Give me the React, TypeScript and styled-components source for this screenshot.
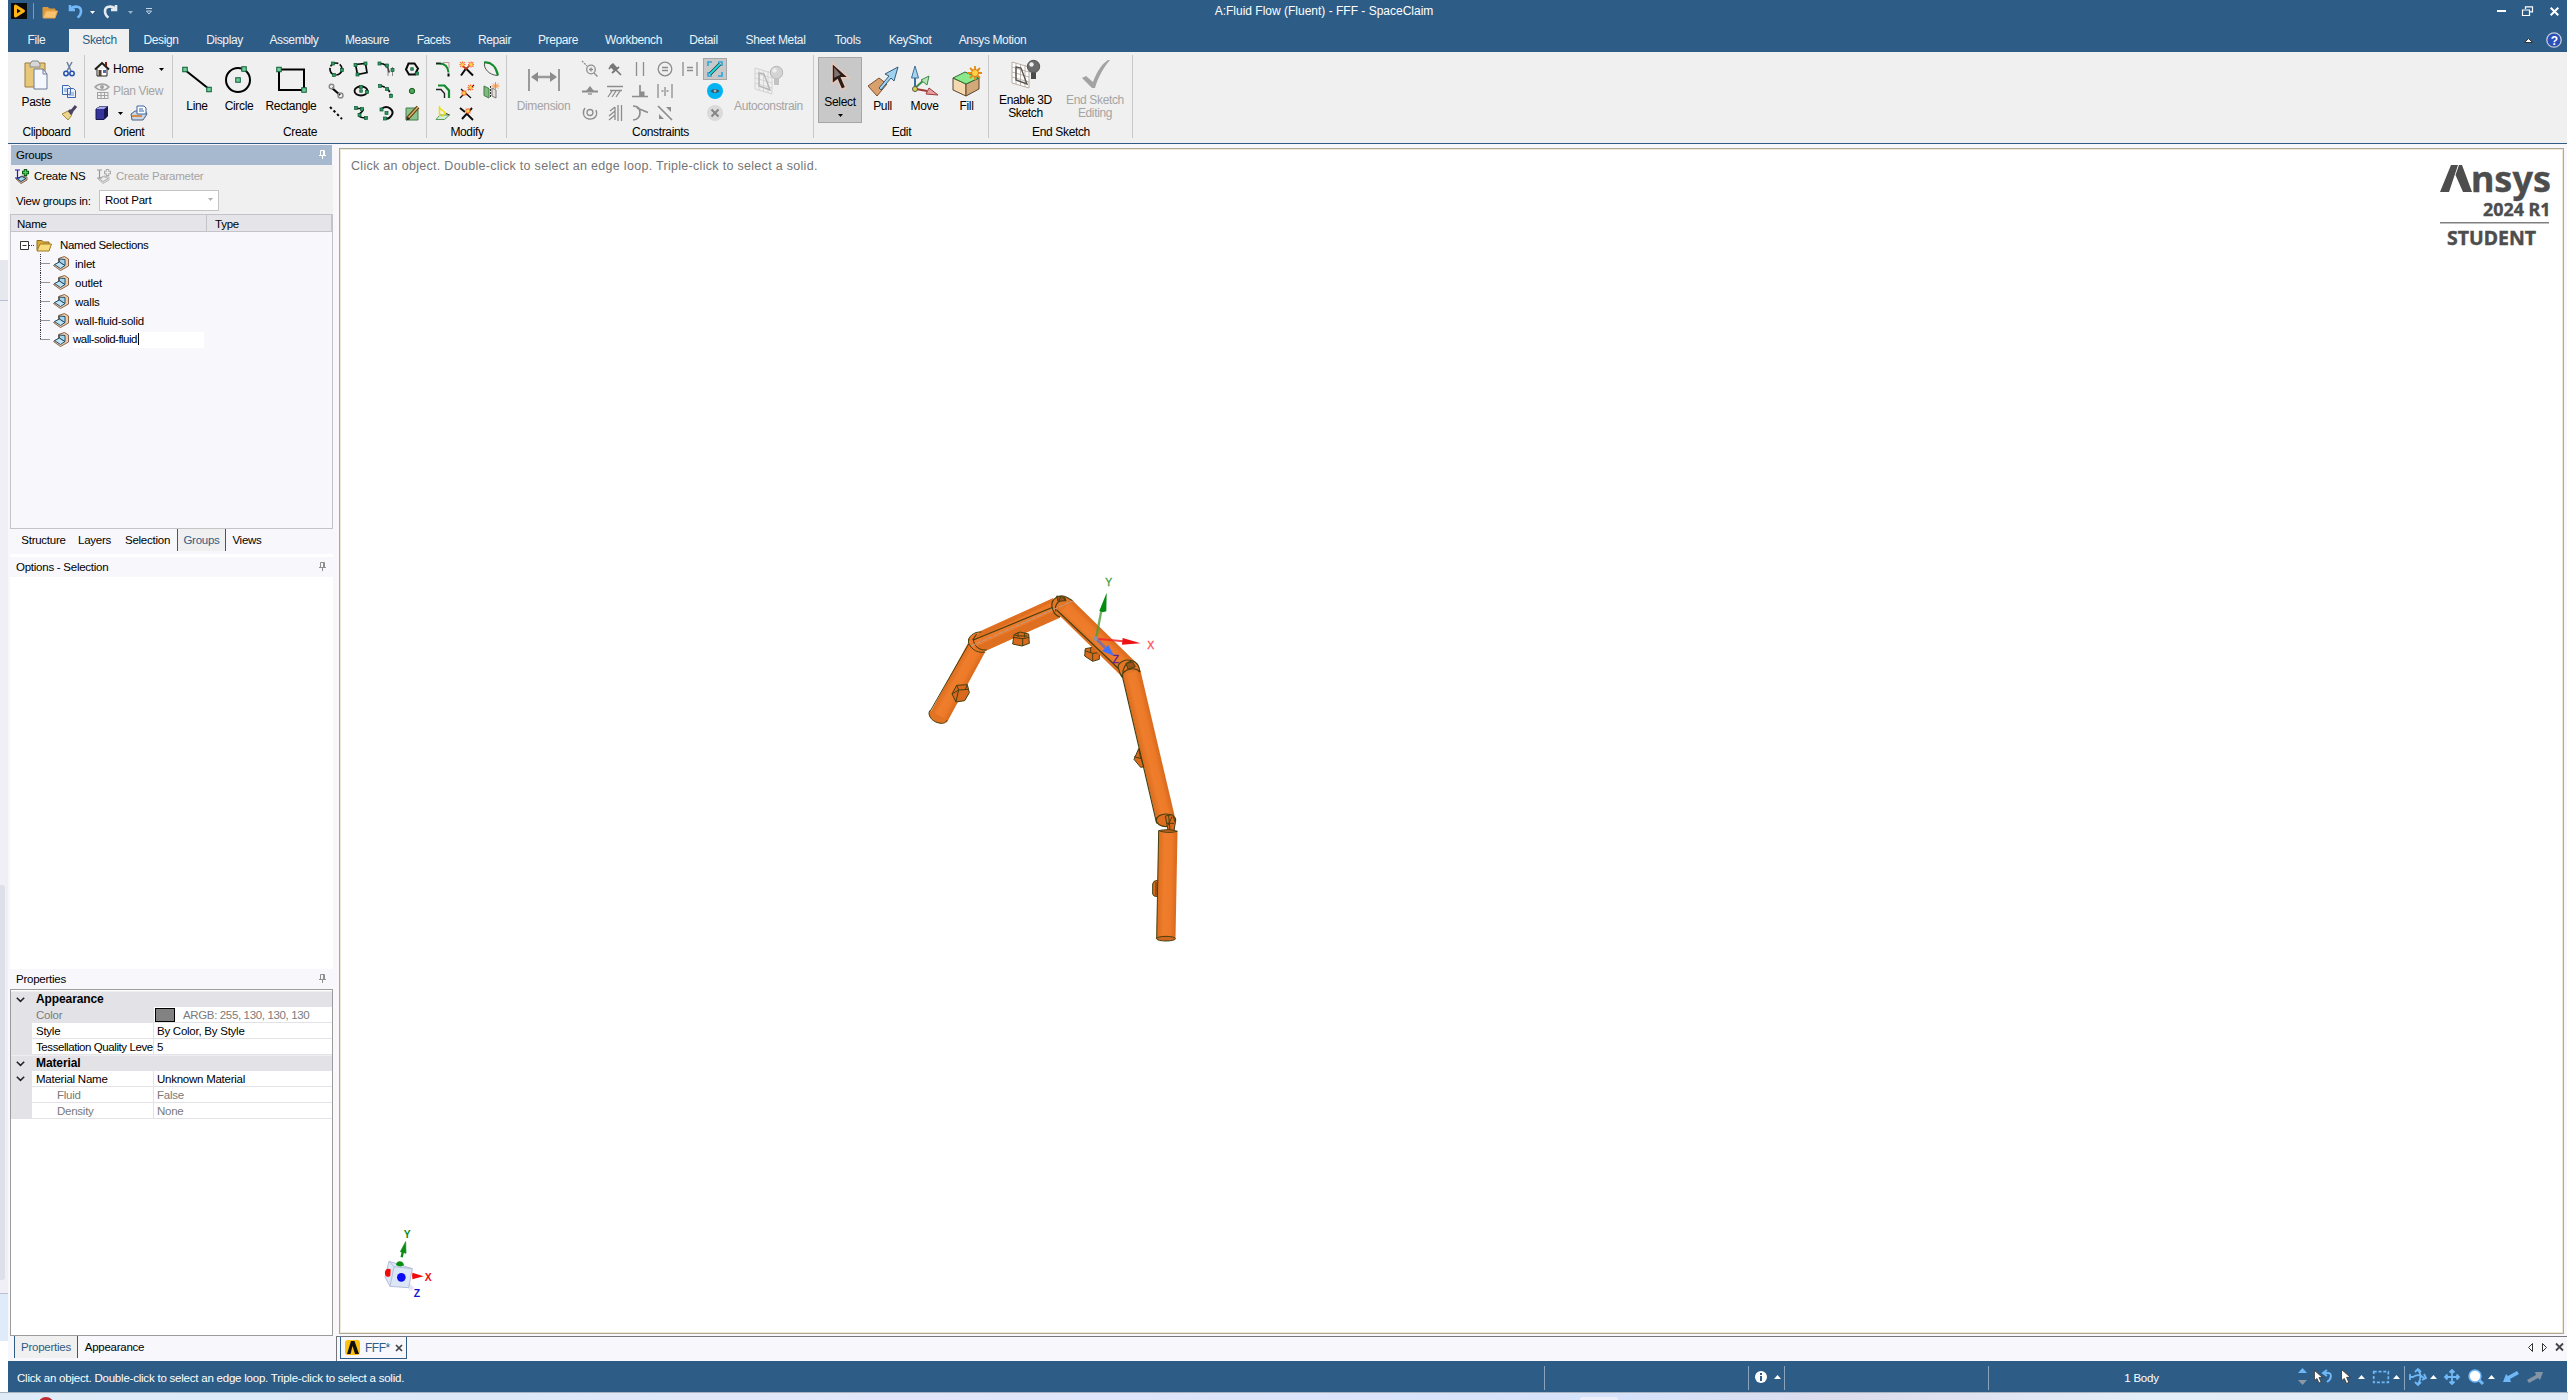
import React from "react";
import styled, { createGlobalStyle } from "styled-components";

const BLUE = "#2d5d87";
const SANS = '"Liberation Sans", Arial, sans-serif';

const Global = createGlobalStyle`
  html, body { margin: 0; padding: 0; background: #fff; }
  * { box-sizing: border-box; }
  body { font-family: ${SANS}; font-size: 11.5px; letter-spacing: -0.25px; color: #000; overflow: hidden; }
  svg { display: block; flex: none; overflow: visible; }
`;

/* ---------- shell ---------- */
const Screen = styled.div`
  width: 2568px; height: 1400px; display: flex; flex-direction: column; background: #fff;
`;
const Upper = styled.div`display: flex; height: 1392px;`;
const Behind = styled.div`width: 8px; display: flex; flex-direction: column;`;
const BehindBlock = styled.div<{ $h: number; $bg: string; $line?: boolean }>`
  height: ${p => p.$h}px; background: ${p => p.$bg};
  ${p => p.$line && "border-top: 1px solid #b8bfd0;"}
`;
const Thumb = styled.div`height: 395px; width: 5px; margin-top: 584px; background: #dfdfe9; border-radius: 0 3px 3px 0;`;
const Window = styled.div`
  width: 2559px; display: flex; flex-direction: column; background: #f7f7fc;
`;
const Desktop = styled.div`
  height: 8px; border-top: 1px solid #a9b4c0; display: flex; overflow: hidden;
  background: linear-gradient(90deg, #dfebf7 0, #dce8f8 500px, #e3e6fa 900px, #d5e2fa 1620px, #dcdcec 1850px, #e4eef8 2150px, #dfebf7 100%);
`;
const RedDot = styled.div`width: 16px; height: 16px; margin: 4px 0 0 38px; border-radius: 50%; background: #c02a30; flex: none;`;
const TaskChip = styled.div`width: 38px; height: 10px; margin: 4px 0 0 1526px; border-radius: 3px; background: #eeeefb; flex: none;`;

/* ---------- title bar ---------- */
const TitleBar = styled.div`
  height: 26px; background: ${BLUE}; color: #fff; display: flex; align-items: flex-start; padding-left: 3px;
`;
const Slot = styled.div<{ $w: number; $h?: number }>`
  width: ${p => p.$w}px; height: ${p => p.$h ?? 22}px; flex: none;
  display: flex; align-items: center; justify-content: center;
`;
const Title = styled.div`
  width: 400px; margin-left: 961px; text-align: center; line-height: 22px; letter-spacing: 0; font-size: 12px;
`;
const WinButtons = styled.div`margin-left: auto; display: flex;`;

const TabRow = styled.div`height: 26px; background: ${BLUE}; display: flex; padding-left: 4px; align-items: stretch;`;
const Tab = styled.div<{ $w: number; $active?: boolean }>`
  width: ${p => p.$w}px; flex: none; text-align: center; line-height: 22px; margin-top: 3px; padding-left: 1px;
  font-size: 12px; letter-spacing: -0.38px; white-space: nowrap;
  color: ${p => (p.$active ? BLUE : "#eef3f8")};
  background: ${p => (p.$active ? "#f0f0f0" : "transparent")};
`;
const TabRight = styled.div`margin-left: auto; display: flex; align-items: center; margin-top: 2px;`;

/* ---------- ribbon ---------- */
const Ribbon = styled.div`
  height: 92px; background: #f0f0f0; border-bottom: 1px solid ${BLUE};
  display: flex; padding-top: 3px; letter-spacing: -0.35px; font-size: 12px; flex: none;
`;
const Group = styled.div<{ $w: number }>`
  width: ${p => p.$w}px; height: 83px; flex: none; border-right: 1px solid #c9c9c9;
  display: flex; flex-direction: column;
`;
const GroupBody = styled.div<{ $pad: number }>`height: 69px; flex: none; display: flex; padding-left: ${p => p.$pad}px;`;
const GroupName = styled.div`text-align: center; line-height: 17px; height: 14px; white-space: nowrap; padding-left: 1px;`;
const Big = styled.div<{ $w: number; $off?: boolean; $top?: number; $gap?: number }>`
  width: ${p => p.$w}px; flex: none; display: flex; flex-direction: column; align-items: center;
  padding-top: ${p => p.$top ?? 8}px; color: ${p => (p.$off ? "#a4a4a4" : "#000")};
  gap: ${p => p.$gap ?? 5}px; line-height: 13px; text-align: center; white-space: nowrap;
`;
const Selected = styled(Big)`
  background: #c8c8c8; border: 1px solid #a6a6a6; height: 66px; margin-top: 2px;
`;
const IconGrid = styled.div<{ $cols: number; $cell: number }>`
  display: grid; grid-template-columns: repeat(${p => p.$cols}, ${p => p.$cell}px);
  grid-auto-rows: 22px; place-items: center; padding-top: 3px; flex: none; height: 69px;
`;
const Column = styled.div<{ $w: number }>`
  width: ${p => p.$w}px; display: flex; flex-direction: column; padding-top: 3px;
`;
const Line = styled.div<{ $off?: boolean }>`
  height: 22px; display: flex; align-items: center; color: ${p => (p.$off ? "#a4a4a4" : "#000")}; white-space: nowrap;
`;
const Picked = styled.div`
  width: 24px; height: 22px; background: #c8c8c8; border: 1px solid #a6a6a6; display: grid; place-items: center;
`;

/* ---------- side panel ---------- */
const Work = styled.div`display: flex; height: 1217px; flex: none;`;
const Side = styled.div`width: 325px; padding: 1px 0 0 2px; display: flex; flex-direction: column; flex: none;`;
const PanelHead = styled.div<{ $active?: boolean }>`
  height: 20px; margin: 0 1px; padding: 0 6px 0 5px; display: flex; align-items: center; justify-content: space-between;
  background: ${p => (p.$active ? "#a7b9ce" : "#f7f7fc")}; flex: none;
`;
const ToolRow = styled.div<{ $h: number }>`
  height: ${p => p.$h}px; background: #f0f0f0; display: flex; align-items: center; padding: 0 0 2px 4px; white-space: nowrap; flex: none;
`;
const Caption = styled.span<{ $w: number; $off?: boolean; $gap?: number }>`
  width: ${p => p.$w}px; margin-left: ${p => p.$gap ?? 4}px; color: ${p => (p.$off ? "#a4a4a4" : "#000")};
`;
const Combo = styled.div`
  width: 120px; height: 21px; background: #fff; border: 1px solid #c4c4c8; display: flex; align-items: center;
  justify-content: space-between; padding: 0 5px 2px 5px;
`;
const Tree = styled.div`
  height: 315px; border: 1px solid #c4c4c8; display: flex; flex-direction: column; flex: none; background: #f7f7fc;
`;
const TreeHead = styled.div`height: 17px; background: #e4e4e9; border-bottom: 1px solid #c4c4c8; display: flex; line-height: 18px; flex: none;`;
const HeadCell = styled.div<{ $w: number; $pad: number }>`
  width: ${p => p.$w}px; padding-left: ${p => p.$pad}px; border-right: 1px solid #c4c4c8;
`;
const Root = styled.div`height: 22px; padding: 4px 0 0 9px; display: flex; align-items: center; flex: none;`;
const RootName = styled.span`margin-left: 8px; letter-spacing: -0.3px;`;
const Leaf = styled.div`height: 19px; display: flex; align-items: center; padding-left: 29px; flex: none;`;
const LeafName = styled.span`margin-left: 6px; letter-spacing: -0.2px;`;
const Edit = styled.span`
  margin-left: 4px; width: 131px; height: 16px; line-height: 15px; background: #fff; letter-spacing: -0.52px;
`;
const Caret = styled.span`display: inline-block; width: 1px; height: 12px; background: #000; vertical-align: -2px; margin-left: 1px;`;
const Tabs = styled.div<{ $h: number; $pad: number }>`
  height: ${p => p.$h}px; display: flex; padding-left: ${p => p.$pad}px; flex: none; line-height: 22px;
`;
const STab = styled.div<{ $w: number; $on?: boolean }>`
  width: ${p => p.$w}px; height: 22px; text-align: center; white-space: nowrap;
  ${p => p.$on && `background:#f0f0f0;color:${BLUE};border-left:1px solid ${BLUE};border-right:1px solid ${BLUE};`}
`;
const White = styled.div<{ $h: number }>`height: ${p => p.$h}px; background: #fff; flex: none;`;
const Props = styled.div`
  height: 347px; border: 1px solid #9c9c9c; background: #fff; flex: none; display: flex; flex-direction: column; padding-top: 1px;
`;
const PRow = styled.div<{ $off?: boolean }>`
  height: 16px; display: flex; line-height: 16px; color: ${p => (p.$off ? "#7a7a7a" : "#000")}; flex: none; white-space: nowrap;
`;
const PSection = styled(PRow)`
  background: #e3e3e7; font-weight: bold; font-size: 12px; letter-spacing: -0.1px; line-height: 15px; border-top: 1px solid #eeeef1;
`;
const SectionName = styled.span`padding-left: 4px;`;
const Gutter = styled.div`width: 21px; background: #e3e3e7; display: flex; align-items: center; padding-left: 5px; flex: none;`;
const PName = styled.div<{ $indent?: boolean; $shade?: boolean }>`
  width: 121px; padding-left: ${p => (p.$indent ? 25 : 4)}px; border-bottom: 1px solid #e3e3e7; flex: none;
  background: ${p => (p.$shade ? "#e3e3e7" : "transparent")};
`;
const Tight = styled.span`letter-spacing: -0.42px;`;
const PVal = styled.div`
  flex: 1; border-left: 1px solid #e3e3e7; border-bottom: 1px solid #e3e3e7; padding-left: 3px; display: flex; align-items: center;
`;
const Swatch = styled.span`width: 20px; height: 14px; background: #828282; border: 1px solid #000; margin: 0 8px 0 -2px;`;
const Argb = styled.span`letter-spacing: -0.36px;`;

/* ---------- viewport ---------- */
const Main = styled.div`flex: 1; display: flex; flex-direction: column; padding-left: 3px; min-width: 0;`;
const Frame = styled.div`
  height: 1186px; margin: 4px 3px 0 3px; position: relative; background: #fff; flex: none;
  border: 1px solid #aba995; box-shadow: inset 0 0 0 1px #efe9d6;
`;
const Hint = styled.div`
  padding: 9px 0 0 11px; color: #757575; font-size: 12.5px; line-height: 16px; letter-spacing: 0.3px;
`;
const Scene = styled.svg<{ $x: number; $y: number }>`position: absolute; left: ${p => p.$x}px; top: ${p => p.$y}px;`;
const DocBar = styled.div`
  margin-top: 2px; height: 25px; border-top: 1px solid #75757d; display: flex; padding-left: 3px; border-left: 1px solid #75757d;
`;
const DocTab = styled.div`
  width: 67px; height: 22px; border: 1px solid ${BLUE}; border-top: 0; background: #f7f7fc; color: ${BLUE};
  display: flex; align-items: center; padding-left: 4px; gap: 5px; font-size: 12px; letter-spacing: -0.5px;
`;
const DocNav = styled.div`margin-left: auto; display: flex; height: 20px;`;

/* ---------- status ---------- */
const Status = styled.div`
  height: 31px; background: ${BLUE}; color: #fff; display: flex; align-items: center; flex: none; letter-spacing: -0.22px;
`;
const StatusText = styled.div<{ $w: number; $center?: boolean }>`
  width: ${p => p.$w}px; padding-left: ${p => (p.$center ? 0 : 9)}px; text-align: ${p => (p.$center ? "center" : "left")};
  padding-top: 2px; flex: none; white-space: nowrap;
`;
const Sep = styled.div<{ $pull?: number }>`
  width: 1px; height: 24px; background: #8aa3bb; margin: 3px 0 0 ${p => -(p.$pull ?? 0)}px; flex: none;
`;

/* ---------- icon helpers ---------- */
const I = ({ w = 16, h = 16, vb, children }: { w?: number; h?: number; vb?: string; children: React.ReactNode }) => (
  <svg width={w} height={h} viewBox={vb ?? `0 0 ${w} ${h}`} fill="none">{children}</svg>
);
const Node = ({ x, y, s = 3 }: { x: number; y: number; s?: number }) => (
  <rect x={x - s / 2} y={y - s / 2} width={s} height={s} fill={s > 3.5 ? "#6fcf97" : "#2e9a62"} stroke="#0c5a34" strokeWidth={s > 3.5 ? 1 : 0.7} />
);
const Down = ({ c = "#000" }: { c?: string }) => <I w={5} h={3}><path d="M0 0h5L2.5 3z" fill={c} /></I>;
const Up = ({ c = "#fff" }: { c?: string }) => <I w={7} h={4}><path d="M0 4h7L3.5 0z" fill={c} /></I>;
const Pin = ({ c }: { c: string }) => (
  <I w={7} h={10}><path d="M1.500 .5h4v5M1.500 .5v5M0 5.500h7M3.500 5.500V9M4.500 1v4" stroke={c} /></I>
);
const Chev = () => <I w={9} h={6}><path d="M.8 .8l3.700 3.600L8.200 .8" stroke="#222" strokeWidth="1.500" /></I>;
const K = { stroke: "#0a0a0a", strokeWidth: 1.7 };
const G = { stroke: "#8d8d8d", strokeWidth: 1.3 };

const createIcons = [
  <I><circle cx="8" cy="8" r="6" {...K} strokeDasharray="9 1.500" /><Node x={5} y={2.5} /><Node x={14} y={9} /><Node x={6} y={14} /></I>,
  <I><path d="M2.500 3.500l10-1 1.500 9L4.500 13.500z" {...K} /><Node x={2.5} y={4} /><Node x={12.500} y={2.500} /><Node x={4.5} y={13.5} /></I>,
  <I><path d="M1.500 2.500c6 0 9 3 9.500 9" {...K} /><path d="M10 6v9M14.500 6v9" stroke="#888" /><Node x={1.500} y={2.500} /><Node x={9} y={4.500} /><Node x={14.500} y={9} /></I>,
  <I><path d="M4.500 2.500h6l3.500 5-3 6H5L2 8.500z" {...K} strokeWidth="2" /><Node x={8} y={8} s={2.500} /><Node x={13} y={12.500} /></I>,
  <I><path d="M4 5l8 7" {...K} strokeWidth="2.200" /><circle cx="3.500" cy="3.500" r="2.300" stroke="#888" strokeWidth="1.400" /><circle cx="12.500" cy="12.500" r="2.500" stroke="#888" strokeWidth="1.400" /></I>,
  <I><ellipse cx="8" cy="8" rx="6.500" ry="4.500" {...K} strokeWidth="1.800" /><Node x={8} y={8} s={2.500} /><Node x={8} y={4} /><Node x={14} y={9} /></I>,
  <I><path d="M2 3c6 0 11 5 11 11" {...K} strokeDasharray="5 2" /><Node x={2} y={3} /><Node x={9} y={6} /><Node x={13} y={13} /></I>,
  <I><circle cx="8" cy="8" r="2.700" fill="#4aa653" stroke="#1c5e2c" /></I>,
  <I><path d="M2 2l12 12" {...K} strokeWidth="2" strokeDasharray="2.500 2.500" /></I>,
  <I><path d="M3 3.500h5c4 0 2 2.500-.5 4.500S6 12 9 12.500l4 .5" {...K} /><Node x={3} y={3} /><Node x={9} y={4} /><Node x={6.500} y={10} /><Node x={13} y={13} /></I>,
  <I><path d="M4 3.500c6-4 13 2 9.500 7-1.500 2.500-4 3.500-6.500 3" {...K} strokeWidth="2" /><Node x={3.500} y={4.500} /><Node x={8.500} y={8} /><Node x={7} y={13.500} /></I>,
  <I><path d="M2 3h12v12H2z" fill="#8cc28c" stroke="#3f8048" /><path d="M3 14L14 2" stroke="#5b3a16" strokeWidth="3.600" /><path d="M4 13L14 2" stroke="#e0b060" strokeWidth="1.500" /><path d="M2 15.500l2-3.500 2 2z" fill="#222" /></I>,
];

const Spark = ({ x, y }: { x: number; y: number }) => (
  <g><path d={`M${x - 2.4} ${y - 2.4}l4.800 4.800M${x + 2.4} ${y - 2.4}l-4.800 4.800M${x - 3} ${y}h6M${x} ${y - 3}v6`} stroke="#ff6a34" strokeWidth="1.100" /><circle cx={x} cy={y} r="1.600" fill="#ffd640" /></g>
);
const modifyIcons = [
  <I><path d="M1 2.500h3c6 0 9 3 9.500 9" stroke="#138a2c" strokeWidth="2" /><path d="M1 2.500h5" stroke="#222" strokeWidth="1.400" /><path d="M8 1.500h6v6" stroke="#c89a9a" /><path d="M13.500 12.500v3" stroke="#000" strokeWidth="2" /></I>,
  <I><path d="M2 14.500l5-7 7 7" {...K} strokeWidth="2" /><path d="M2 3l5 5 6-6" stroke="#b8341a" strokeWidth="1.600" /><Spark x={3.500} y={3.500} /><Spark x={12} y={3.500} /></I>,
  <I><path d="M1 1.500c7-1 12 4 14 13" stroke="#138a2c" strokeWidth="2.200" /><path d="M1.500 2c-1 5 4 12 13 12.500" stroke="#555" /></I>,
  <I><path d="M3 2.500h6.500l4.500 5V15" stroke="#138a2c" strokeWidth="2.200" /><path d="M1 6.500h5l3.500 4V15" stroke="#222" strokeWidth="1.400" /></I>,
  <I><path d="M1 15l5-5M9 7l6-5M2 6l10 9" {...K} strokeWidth="1.200" /><Spark x={5} y={10} /><Spark x={11.500} y={4.500} /></I>,
  <I><path d="M1 3l5 2.500V15l-5-2.500z" fill="#7dbb7d" stroke="#3f7a46" /><path d="M7.500 3v12" stroke="#333" strokeDasharray="2 1" /><path d="M9 5l4 2v8l-4-2z" fill="#e6e2da" stroke="#777" /><path d="M12.500 -1v8M8.500 3h8M10 .5l5 5M15 .5l-5 5" stroke="#ff8a2a" /></I>,
  <I><path d="M1 14.500l4-4.500h9.500l-5 4.500z" fill="#d4ecd4" stroke="#5a9a60" /><path d="M4.500 1v10M4.500 3l6 5-4 3.500" stroke="#ebe000" strokeWidth="1.500" /><path d="M11 8.500l3.500 1.500" stroke="#333" /></I>,
  <I><path d="M1 3l5 4M8 9l6 6M13 3L3 14" {...K} strokeWidth="1.900" /><Spark x={9} y={6} /></I>,
  null,
];

const constraintIcons = [
  <I><path d="M0 0l5 5" {...G} strokeDasharray="2 1" /><circle cx="9" cy="8.500" r="4.300" {...G} /><path d="M9 6.500v4M7 8.500h4M12 12l3.500 3.500" {...G} /></I>,
  <I><path d="M2.500 5L6 2l5 5.500-3.500 3z" fill="#777" /><path d="M2 8l3-4M5 12l7-6M9 9l5 5" stroke="#777" strokeWidth="1.700" /></I>,
  <I><path d="M4.500 1v14M11.500 1v14" {...G} /></I>,
  <I><circle cx="8" cy="8" r="6.800" {...G} /><path d="M5 6.500h6M5 9.500h6" {...G} strokeWidth="1.600" /></I>,
  <I><path d="M1 1v14M15 1v14M5 6.500h6M5 9.500h6" {...G} /></I>,
  <Picked><I><path d="M1 5V1h4M11 1h4v4M1 11v4h4M11 15h4v-4" stroke="#2ba6dd" strokeWidth="1.600" /><path d="M3 13L13 3" stroke="#083c50" strokeWidth="3.200" /><path d="M3 13L13 3" stroke="#21e0dc" strokeWidth="1.800" /></I></Picked>,
  <I><path d="M0 8.500h16" {...G} strokeWidth="2" /><path d="M4 8l4-5 4 5z" fill="#8d8d8d" /><path d="M6 11h4" {...G} /></I>,
  <I><path d="M0 3.500h16M3 7.500h12" {...G} strokeWidth="1.700" /><path d="M5 8l-4 6M9 8l-4 6M13 8l-4 6" {...G} /></I>,
  <I><path d="M8 2v11M0 13.500h16" {...G} strokeWidth="1.700" /><path d="M8 8.500h4.500V13H8z" fill="#8d8d8d" /></I>,
  <I><path d="M1 1v14M15 1v14M8 4v9M4.500 8h2M9.500 8h2" {...G} /></I>,
  null,
  <I><circle cx="8" cy="8" r="8" fill="#00b4f4" /><path d="M3.500 8c2.500-2.800 6.500-2.800 9 0-2.500 2.800-6.500 2.800-9 0z" fill="#3b5464" /><circle cx="8" cy="8" r="1.400" fill="#9fb7c4" /></I>,
  <I><circle cx="8" cy="7.500" r="3" {...G} /><path d="M3 3C0 7 1 13 7 14s9-4 7-9" {...G} /></I>,
  <I><path d="M11 0v16M14.500 0v16M8 2L3 6M8 6l-6 5M8 10l-6 5M8 2v13" {...G} /></I>,
  <I><path d="M1 1c5 0 7 3 7 6.500S6 15 1 15M5 3l11 4.500" {...G} strokeWidth="1.700" /></I>,
  <I><path d="M1 1l14 14" {...G} strokeWidth="1.700" /><path d="M9 2h5v5zM2 9v5h5z" fill="#8d8d8d" /></I>,
  null,
  <I><circle cx="8" cy="8" r="8" fill="#dadada" /><path d="M4.500 4.500l7 7M11.500 4.500l-7 7" stroke="#858585" strokeWidth="2" /></I>,
];

const SketchBulb = ({ dim }: { dim?: boolean }) => {
  const a = dim ? "#b5b5b5" : "#555", b = dim ? "#d2d2d2" : "#b8aca0";
  return (
    <I w={30} h={30}>
      <path d="M1 3l17 5v21L1 24z" fill={dim ? "#efefef" : "#fff"} stroke={b} />
      <path d="M5 4v21M9.500 5v22M14 6v22M1 8l17 5M1 13l17 5M1 18l17 5" stroke={b} strokeWidth=".9" />
      <path d="M5 8l5 1 6 16-11-4z" stroke={a} strokeWidth="1.400" />
      <circle cx="22.500" cy="7.500" r="6.200" fill={dim ? "#d4d4d4" : "#6a6a6a"} stroke={a} />
      <circle cx="20.500" cy="5.500" r="2.200" fill="#eee" />
      <path d="M20 13.500h5V20h-5z" fill={dim ? "#c2c2c2" : "#4a4a4a"} />
    </I>
  );
};

const Cursor = ({ dark, w = 12 }: { dark?: boolean; w?: number }) => (
  <I w={w} h={w * 1.5} vb="0 0 18 27">
    <path d="M1 1v20l5-4 4 9 4-2-4-9h7z" fill={dark ? "#2b1c1a" : "#fff"} stroke={dark ? "#e8c8b8" : "#332a22"} strokeWidth="1.400" />
    {dark && <path d="M3 5v10l6-3z" fill="#7d7472" />}
  </I>
);

const LeafIcon = () => (
  <I w={16} h={15}>
    <path d="M.5 9.500l7 5 8-4.500V3L11.500 .5 5.500 2.500v4z" fill="#f0cba8" stroke="#7a573c" strokeWidth=".9" />
    <path d="M1.500 8.500l6 4 4.500-3-5.500-3.500z" fill="#bfe2f5" stroke="#16435c" strokeWidth=".9" />
    <path d="M6 3l6 .5v6L6.500 6z" fill="#a5d4ee" stroke="#16435c" strokeWidth=".9" />
  </I>
);
const NsIcon = ({ off }: { off?: boolean }) => (
  <I w={16} h={15}>
    <path d="M2 10l5 4.500 6-3.500V8L8 7z" fill={off ? "#ddd" : "#e8b48a"} stroke={off ? "#bbb" : "#7a6a60"} />
    <path d="M3 9.500l4 3 5-3-4-2z" fill={off ? "#eee" : "#a9d8f0"} stroke={off ? "#b0b0b0" : "#16435c"} />
    <path d="M1 1h5M3.500 1v8M1 9h5" stroke={off ? "#999" : "#2a1ab0"} strokeWidth="1.200" />
    <path d="M11.500 0v7M8 3.500h7" stroke={off ? "#aaa" : "#0a5a14"} strokeWidth="3.400" />
    <path d="M11.500 1v5M9 3.500h5" stroke={off ? "#eee" : "#4ed05a"} strokeWidth="1.500" />
  </I>
);
const Folder = ({ orange }: { orange?: boolean }) => (
  <I w={16} h={13}>
    <path d="M1 11V1.500h5L7.500 3H13v2" fill={orange ? "#dc9838" : "#d9ab3c"} stroke={orange ? "#dc9838" : "#8f6a1c"} />
    <path d="M1 12L4 5h11.500L13 12z" fill={orange ? "#f8c370" : "#f6dc7c"} stroke={orange ? "#e6a64c" : "#a07820"} />
  </I>
);

/* ---------- 3D scene ---------- */
const E = "#453f10";
const Tube = ({ a, b, r, id }: { a: [number, number]; b: [number, number]; r: number; id: string }) => {
  const dx = b[0] - a[0], dy = b[1] - a[1], L = Math.hypot(dx, dy);
  const nx = (-dy / L) * r, ny = (dx / L) * r;
  const pts = [[a[0] + nx, a[1] + ny], [b[0] + nx, b[1] + ny], [b[0] - nx, b[1] - ny], [a[0] - nx, a[1] - ny]];
  return (
    <g>
      <linearGradient id={id} gradientUnits="userSpaceOnUse" x1={pts[0][0]} y1={pts[0][1]} x2={pts[3][0]} y2={pts[3][1]}>
        <stop offset="0" stopColor="#dc6d1e" /><stop offset=".35" stopColor="#ee7d2c" /><stop offset=".7" stopColor="#ed7a29" /><stop offset="1" stopColor="#d9691b" />
      </linearGradient>
      <polygon points={pts.map(p => p.join(",")).join(" ")} fill={`url(#${id})`} />
    </g>
  );
};
const Box = ({ d, x }: { d: string; x: string }) => (
  <g stroke={E} strokeWidth="3" strokeLinejoin="round"><path d={d} fill="#d9691c" /><path d={x} fill="none" /></g>
);

const Model = () => (
  <Scene $x={560} $y={411} width={300} height={400} viewBox="0 0 900 1200" fill="none">
    {/* lower left arm */}
    <Tube id="t1" a={[230, 262]} b={[115, 474]} r={29} />
    <path d="M206 252L89 456" stroke={E} strokeWidth="3" />
    <path d="M89 452c-8 16 10 36 34 38 12 1 17-6 18-10" fill="#e27322" stroke={E} strokeWidth="3" />
    <Box d="M170 376l32-2 6 24-14 24-26 4-12-24z" x="M156 402l20-12 30-2M176 390l-6-14M176 390l-8 34M202 374l-6 14" />
    {/* upper left arm */}
    <path d="M206 238c2-12 18-20 34-22L458 116l34 50L262 270c-24 14-50-2-56-32z" fill="#ec7a2a" />
    <path d="M240 214L460 114l-2 12L222 240z" fill="#de6f20" />
    <path d="M224 262L480 146l-2 28L262 270c-14 8-28 4-38-8z" fill="#de6f20" />
    <path d="M220 240L462 140M230 222l-12 18" stroke={E} strokeWidth="3.500" />
    <path d="M206 250c-4-20 16-36 38-34M206 236c-4 24 22 46 50 40M220 236c0 20 16 36 40 34" stroke={E} strokeWidth="3" />
    <Box d="M342 224l18-8 26 6 2 28-22 8-28-6z" x="M338 232l30 4 20-4M368 236v22M354 216v14M374 218v14M342 224l12 4h28" />
    {/* upper right arm */}
    <Box d="M556 266l22-4 20 16v20l-20 6-24-16z" x="M554 272l24 8 20-2M578 280v22M572 264v14" />
    <path d="M456 140c-4-26 26-40 44-28l22 14-46 46c-14-8-18-20-20-32z" fill="#e67626" />
    <Tube id="t3" a={[496, 142]} b={[684, 326]} r={30} />
    <path d="M470 150L660 330" stroke={E} strokeWidth="3.500" />
    <path d="M456 140c-4-26 26-40 44-28l18 10M468 154c-6-20 8-36 28-34M456 140c2 14 10 26 24 32" stroke={E} strokeWidth="3.500" />
    <path d="M470 108l24 4 4 10-24 2zM482 110l-4 12M490 112l6 10" fill="#9a5418" stroke={E} strokeWidth="3" />
    <path d="M214 258L520 122" stroke="#b9a08e" strokeWidth="3" strokeDasharray="14 4" />
    {/* right arm */}
    <Box d="M716 566l14 8 4 46-12 2-20-24z" x="M702 590l22 6 8 24M716 566l6 30" />
    <path d="M654 326c-2-20 22-30 42-24 16 4 24 20 26 42l-54 8c-8-8-12-16-14-26z" fill="#e67626" />
    <Tube id="t4" a={[694, 338]} b={[798, 780]} r={28} />
    <path d="M666 344L770 790" stroke={E} strokeWidth="3.500" />
    <path d="M654 326c-2-20 22-30 42-24 16 4 22 18 24 34M654 320c4 18 8 26 14 34M666 346c6-18 38-28 54-10M668 350c-2-20 8-44 26-46" stroke={E} strokeWidth="3.500" />
    <path d="M678 310l20-4 8 14-22 8z" fill="#9a5418" stroke={E} strokeWidth="3" />
    <ellipse cx="798" cy="781" rx="29" ry="19" fill="#dd6e20" stroke={E} strokeWidth="3.500" />
    {/* bottom arm */}
    <Box d="M796 768l22-4 8 24-4 24-18-2z" x="M806 768l4 42M816 770l-12 26M800 790h22" />
    <Box d="M762 964l14-4v50l-14-2-4-6v-30z" x="M768 966v40" />
    <Tube id="t5" a={[804, 814]} b={[798, 1136]} r={28.5} />
    <path d="M776 812l-6 324" stroke={E} strokeWidth="3" />
    <path d="M776 812c16-4 44-4 56 2-16 5-42 4-56-2z" fill="#c96420" stroke={E} strokeWidth="3" />
    <ellipse cx="798" cy="1136" rx="28.5" ry="7" fill="#cf6820" stroke={E} strokeWidth="3" />
    {/* axes */}
    <path d="M588 236l16-84" stroke="#4c9e3a" strokeWidth="7" opacity=".8" />
    <path d="M620 98l-22 54c6 5 14 5 21 2z" fill="#078a10" />
    <path d="M588 236l82 8" stroke="#f4262a" strokeWidth="6" opacity=".85" />
    <path d="M722 250l-54-16-2 20z" fill="#ee1111" />
    <path d="M588 236l28 28" stroke="#8a6f9a" strokeWidth="9" />
    <path d="M638 284l-14-26-14 14z" fill="#3f74ff" stroke="#3f74ff" strokeWidth="4" />
    <circle cx="587" cy="236" r="7" fill="#8b939e" />
    <g fontFamily={SANS} fontSize="31" letterSpacing="0">
      <text x="616" y="78" fill="#43a047" stroke="#43a047">Y</text>
      <text x="742" y="266" fill="#ff4d4d" stroke="#ff4d4d">X</text>
      <text x="638" y="308" fill="#5a1f9a" stroke="#5a1f9a">Z</text>
    </g>
  </Scene>
);

const Triad = () => (
  <Scene $x={0} $y={1051} width={140} height={120} viewBox="0 0 420 360" fill="none">
    <path d="M188 240l30 28" stroke="#e4e4fb" strokeWidth="14" />
    <path d="M147 184l70 22-11 57-56-4-15-28z" fill="#dbe6f7" stroke="#b6bed8" strokeWidth="3" />
    <path d="M147 184l15 16 55 6M162 200l-12 59" stroke="#b6bed8" strokeWidth="3" />
    <path d="M168 194c2-14 22-14 24 2-8 5-18 4-24-2z" fill="#079010" />
    <path d="M152 208c-14-6-20 6-16 17 4 8 12 6 15 2z" fill="#f40808" />
    <circle cx="184" cy="232" r="13" fill="#0a0af4" />
    <path d="M185 172l4-18" stroke="#0b8a14" strokeWidth="7" />
    <path d="M197 125l-16 30 17 5z" fill="#0b8a14" stroke="#0b8a14" strokeWidth="2" />
    <path d="M217 227h10" stroke="#f40808" strokeWidth="6" />
    <path d="M251 229l-34-11v20z" fill="#f40808" />
    <g fontFamily={SANS} fontSize="31" fontWeight="bold" letterSpacing="0">
      <text x="191" y="114" fill="#0b8a14">Y</text><text x="254" y="243" fill="#f40808">X</text><text x="221" y="290" fill="#1414d8">Z</text>
    </g>
  </Scene>
);

const Logo = () => (
  <Scene $x={2100} $y={15} width={114} height={86} viewBox="0 0 114 86">
    <path d="M0 28L11 1h7L9 28zM19 1h3l10 27h-9L15.500 11z" fill="#4d4d4d" />
    <g fill="#4d4d4d" stroke="#4d4d4d" strokeWidth=".4" fontFamily='"Noto Sans", "Open Sans", sans-serif' fontWeight="bold" letterSpacing="0">
      <text x="31" y="28" fontSize="36" textLength="80" lengthAdjust="spacingAndGlyphs">nsys</text>
      <text x="43" y="52" fontSize="18.500" textLength="67.500" lengthAdjust="spacingAndGlyphs">2024 R1</text>
      <text x="7" y="80.500" fontSize="19" textLength="89" lengthAdjust="spacingAndGlyphs">STUDENT</text>
    </g>
    <path d="M0 58h109v1.500H0z" fill="#808080" />
  </Scene>
);

const tabs: [string, number, boolean?][] = [
  ["File", 48], ["", 9], ["Sketch", 60, true], ["Design", 63], ["Display", 64], ["Assembly", 75], ["Measure", 71], ["Facets", 62],
  ["Repair", 60], ["Prepare", 67], ["Workbench", 84], ["Detail", 56], ["Sheet Metal", 88], ["Tools", 56], ["KeyShot", 69], ["Ansys Motion", 96],
];

const TopBar = () => (
  <>
    <TitleBar>
      <I w={16} h={19}><path d="M0 3h16v16H0z" fill="#0a0a0a" /><path d="M4.500 6l8 5-8 5z" stroke="#fdb515" strokeWidth="3" strokeLinejoin="round" /></I>
      <Slot $w={13}><I w={1} h={16}><path d="M0 0h1v16H0z" fill="#7f9bb5" /></I></Slot>
      <Slot $w={20} $h={24}><Folder orange /></Slot>
      <Slot $w={30}><I w={15} h={14}><path d="M2 1v5h5M2.500 5.500C6 1 13 2 13 7c0 3-1 5-3.500 6.500" stroke="#72b8f8" strokeWidth="2.600" /></I></Slot>
      <Slot $w={5} $h={24}><Down c="#fff" /></Slot>
      <Slot $w={31}><I w={15} h={14}><path d="M13 1v5H8M12.500 5.500C9 1 2 2 2 7c0 3 1 5 3.500 6.500" stroke="#e4e9ee" strokeWidth="2.600" /></I></Slot>
      <Slot $w={8} $h={24}><Down c="#9db2c5" /></Slot>
      <Slot $w={29}><I w={6} h={7}><path d="M0 .5h6" stroke="#c8d4df" /><path d="M.5 3h5L3 6z" stroke="#c8d4df" /></I></Slot>
      <Title>A:Fluid Flow (Fluent) - FFF - SpaceClaim</Title>
      <WinButtons>
        <Slot $w={24}><I w={9} h={2}><path d="M0 0h9v2H0z" fill="#fff" /></I></Slot>
        <Slot $w={28}><I w={11} h={10}><path d="M3.500 3V.8h7v5H8M.5 4h7v5.500h-7z" stroke="#fff" strokeWidth="1.200" /></I></Slot>
        <Slot $w={26}><I w={9} h={9}><path d="M.7 .7l7.600 7.600M8.300 .7L.7 8.300" stroke="#fff" strokeWidth="2" /></I></Slot>
      </WinButtons>
    </TitleBar>
    <TabRow>
      {tabs.map(([t, w, a], i) => <Tab key={i} $w={w} $active={a}>{t}</Tab>)}
      <TabRight>
        <Slot $w={26}><I w={9} h={5}><path d="M.5 4.500h8l-4-4z" fill="#fff" stroke="#333" /></I></Slot>
        <Slot $w={26}>
          <I w={16} h={16}><circle cx="8" cy="8" r="7.200" fill="#2a50b8" stroke="#c3cbd8" strokeWidth="1.300" /><text x="4.700" y="12.500" fontSize="12" fontWeight="bold" fill="#fff">?</text></I>
        </Slot>
      </TabRight>
    </TabRow>
  </>
);

const RibbonBar = () => (
  <Ribbon>
    <Group $w={77}>
      <GroupBody $pad={4}>
        <Big $w={48} $top={4} $gap={5}>
          <I w={26} h={32}>
            <path d="M2 4h20v24H2z" fill="#e8c778" stroke="#9c7c3c" /><path d="M7 5l2-3h6l2 3v3H7z" fill="#d7d7d7" stroke="#8a8a8a" />
            <path d="M11 10h9l4 5v15H11z" fill="#f4f8fd" stroke="#6a7a94" /><path d="M20 10v5h4" stroke="#6a7a94" />
          </I>
          Paste
        </Big>
        <IconGrid $cols={1} $cell={17}>
          <I w={12}><path d="M4 1l4 9M9 1L4 10" stroke="#6a7f9c" strokeWidth="1.500" /><circle cx="3" cy="12.500" r="2.200" stroke="#2450b0" strokeWidth="1.500" /><circle cx="9" cy="12.500" r="2.200" stroke="#2450b0" strokeWidth="1.500" /></I>
          <I w={16}><path d="M1.500 2.500h6l2 2v7h-8zM6.500 5.500h6l2 2v7h-8z" fill="#eaf1fc" stroke="#3c66b0" /><path d="M3 6h3M3 8h3M8 10h5M8 12h5" stroke="#6f92cc" /></I>
          <I w={16}><path d="M1 9l6-3 4 4-4 5z" fill="#ecd48a" stroke="#a68a3c" /><path d="M8 5l3 4M10 7l5-6" stroke="#4a4460" strokeWidth="3" /></I>
        </IconGrid>
      </GroupBody>
      <GroupName>Clipboard</GroupName>
    </Group>
    <Group $w={88}>
      <GroupBody $pad={9}>
        <Column $w={79}>
          <Line>
            <I w={16}><path d="M3 8v7h10V8" fill="#fff" stroke="#222" /><path d="M1 8.500L8 2l7 6.500" stroke="#1d1a14" strokeWidth="2" /><path d="M12 1v4" stroke="#7a1a10" strokeWidth="2" /><path d="M4.500 9h3v6h-3z" fill="#50402c" /><path d="M9 9h3v3H9z" fill="#4a68b8" /></I>
            <Caption $w={46} $gap={3}>Home</Caption><Down />
          </Line>
          <Line $off>
            <I w={16}><path d="M1 4c4-4 10-4 14 0-4 4-10 4-14 0z" stroke="#a2a2a2" strokeWidth="1.500" /><circle cx="8" cy="4" r="2" fill="#a2a2a2" /><path d="M3 9.500h11M3 12.500h11M3 15.500h11M3.500 9v7M7 9v7M10.500 9v7M14 9v7" stroke="#a2a2a2" /></I>
            <Caption $w={58} $off $gap={3}>Plan View</Caption>
          </Line>
          <Line>
            <I w={16}><path d="M2 4l4-2.500h7.500V11L10 14.500H2z" fill="#34349c" stroke="#17174a" /><path d="M2 4l4-2.500h7.500L10 4z" fill="#a6a6e4" /><path d="M10 4.500v10l3.500-3.500V1.500z" fill="#18184e" /></I>
            <Slot $w={20}><Down /></Slot>
            <I w={18}><path d="M1 9l4-3h10l2 3-4 6H2z" fill="#cbd5e4" stroke="#4a6080" /><path d="M7 1h7l2 2v6H7z" fill="#fff" stroke="#3466a8" /><path d="M9 4h4M9 6h5" stroke="#3466a8" /><path d="M2 11h10" stroke="#d28c4c" strokeWidth="2" /></I>
          </Line>
        </Column>
      </GroupBody>
      <GroupName>Orient</GroupName>
    </Group>
    <Group $w={254}>
      <GroupBody $pad={2}>
        <Big $w={44}><I w={30} h={32}><path d="M3 7l24 19" stroke="#000" strokeWidth="2" /><Node x={3} y={6.500} s={4.500} /><Node x={27} y={26.500} s={4.500} /></I>Line</Big>
        <Big $w={40}><I w={30} h={32}><circle cx="14" cy="17" r="12" stroke="#000" strokeWidth="2" /><Node x={14} y={17} s={4.500} /><Node x={20} y={6} s={4.500} /></I>Circle</Big>
        <Big $w={64}><I w={30} h={32}><path d="M3 6.500h25v20.500H3z" stroke="#000" strokeWidth="2" /><Node x={3} y={6.500} s={4.500} /><Node x={28} y={27} s={4.500} /></I>Rectangle</Big>
        <IconGrid $cols={4} $cell={25.3}>{createIcons.map((c, i) => <div key={i}>{c}</div>)}</IconGrid>
      </GroupBody>
      <GroupName>Create</GroupName>
    </Group>
    <Group $w={80}>
      <GroupBody $pad={4}><IconGrid $cols={3} $cell={24.2}>{modifyIcons.map((c, i) => <div key={i}>{c}</div>)}</IconGrid></GroupBody>
      <GroupName>Modify</GroupName>
    </Group>
    <Group $w={307}>
      <GroupBody $pad={3}>
        <Big $w={67} $off><I w={32} h={32}><path d="M1 6v22M31 6v22" stroke="#9a9a9a" strokeWidth="2" /><path d="M5 14h22" stroke="#9a9a9a" strokeWidth="2.500" /><path d="M3 14l7-5v10zM29 14l-7-5v10z" fill="#8c8c8c" /></I>Dimension</Big>
        <IconGrid $cols={6} $cell={25}>{constraintIcons.map((c, i) => <div key={i}>{c}</div>)}</IconGrid>
        <Big $w={83} $off $top={10} $gap={5}><SketchBulb dim />Autoconstrain</Big>
      </GroupBody>
      <GroupName>Constraints</GroupName>
    </Group>
    <Group $w={175}>
      <GroupBody $pad={4}>
        <Selected $w={44} $top={4} $gap={5}><Cursor dark w={19} />Select<Down /></Selected>
        <Big $w={41} $top={11} $gap={3}>
          <I w={32} h={31}><path d="M1 20l11-8 8 6-10 12z" fill="#d8a06c" stroke="#805030" /><path d="M12 22l10-12-4-2L31 1l-4 14-3-3-10 12z" fill="#9fd2f0" stroke="#335a78" /></I>Pull
        </Big>
        <Big $w={43} $top={11} $gap={3}>
          <I w={30} h={31}><path d="M5 23V10" stroke="#3a6f9a" strokeWidth="2" /><path d="M5 0l3.500 12h-7z" fill="#a8d4f0" stroke="#3a6f9a" /><path d="M5 22l8-7" stroke="#3e8a4a" strokeWidth="2" /><path d="M19 10l-2 9-6-5z" fill="#b4e4b4" stroke="#3e8a4a" /><path d="M6 23l11 2" stroke="#a03a3a" strokeWidth="2" /><path d="M28 29l-12-1 3-6z" fill="#e6a0a0" stroke="#a03a3a" /><circle cx="5" cy="23" r="2.500" fill="#d8d840" stroke="#555" /></I>Move
        </Big>
        <Big $w={41} $top={11} $gap={3}>
          <I w={30} h={31}><path d="M1 12l13 6v12L1 24z" fill="#f4d9b0" stroke="#5a4430" /><path d="M14 18l13-6v11l-13 7z" fill="#d3a878" stroke="#5a4430" /><path d="M1 12l12-6 14 6-13 6z" fill="#8be88b" stroke="#2f6a34" /><path d="M23 0v14M16 7h14M18 2l10 10M28 2L18 12" stroke="#e88a10" strokeWidth="1.800" /><circle cx="23" cy="7" r="3.500" fill="#ffd24a" stroke="#e07808" /></I>Fill
        </Big>
      </GroupBody>
      <GroupName>Edit</GroupName>
    </Group>
    <Group $w={144}>
      <GroupBody $pad={1}>
        <Big $w={71} $top={4} $gap={5}><SketchBulb /><span>Enable 3D<br />Sketch</span></Big>
        <Big $w={68} $top={4} $gap={5} $off><I w={30} h={30}><path d="M2 19l4-2 7 6C17 12 22 5 28 1h2C24 8 18 18 15 29h-3z" fill="#a3a3a3" /></I><span>End Sketch<br />Editing</span></Big>
      </GroupBody>
      <GroupName>End Sketch</GroupName>
    </Group>
  </Ribbon>
);

const Branch = ({ last }: { last?: boolean }) => (
  <I w={13} h={19}><path d={last ? "M.5 0v10M.5 9.500h9" : "M.5 0v19M.5 9.500h9"} stroke="#333" strokeDasharray="1 1" /></I>
);

const SidePanels = () => (
  <Side>
    <PanelHead $active>Groups<Pin c="#fff" /></PanelHead>
    <ToolRow $h={24}><NsIcon /><Caption $w={62}>Create NS</Caption><NsIcon off /><Caption $w={100} $off>Create Parameter</Caption></ToolRow>
    <ToolRow $h={25}><Caption $w={83} $gap={2}>View groups in:</Caption><Combo>Root Part<Down c="#b0b0b0" /></Combo></ToolRow>
    <Tree>
      <TreeHead><HeadCell $w={196} $pad={6}>Name</HeadCell><HeadCell $w={125} $pad={8}>Type</HeadCell></TreeHead>
      <Root>
        <I w={16} h={13}><path d="M.5 2.500h8v8h-8z" fill="#fff" stroke="#333" /><path d="M2.500 6.500h4" stroke="#333" /><path d="M9 6.500h6" stroke="#333" strokeDasharray="1 1" /></I>
        <Folder /><RootName>Named Selections</RootName>
      </Root>
      {["inlet", "outlet", "walls", "wall-fluid-solid"].map(n => <Leaf key={n}><Branch /><LeafIcon /><LeafName>{n}</LeafName></Leaf>)}
      <Leaf><Branch last /><LeafIcon /><Edit>wall-solid-fluid<Caret /></Edit></Leaf>
    </Tree>
    <Tabs $h={25} $pad={6}>
      <STab $w={55}>Structure</STab><STab $w={47}>Layers</STab><STab $w={59}>Selection</STab><STab $w={49} $on>Groups</STab><STab $w={42}>Views</STab>
    </Tabs>
    <White $h={3} />
    <PanelHead>Options - Selection<Pin c="#8f8f8f" /></PanelHead>
    <White $h={392} />
    <PanelHead>Properties<Pin c="#8f8f8f" /></PanelHead>
    <Props>
      <PSection><Gutter><Chev /></Gutter><SectionName>Appearance</SectionName></PSection>
      <PRow $off><Gutter /><PName $shade>Color</PName><PVal><Swatch /><Argb>ARGB: 255, 130, 130, 130</Argb></PVal></PRow>
      <PRow><Gutter /><PName>Style</PName><PVal>By Color, By Style</PVal></PRow>
      <PRow><Gutter /><PName><Tight>Tessellation Quality Leve</Tight></PName><PVal>5</PVal></PRow>
      <PSection><Gutter><Chev /></Gutter><SectionName>Material</SectionName></PSection>
      <PRow><Gutter><Chev /></Gutter><PName>Material Name</PName><PVal>Unknown Material</PVal></PRow>
      <PRow $off><Gutter /><PName $indent>Fluid</PName><PVal>False</PVal></PRow>
      <PRow $off><Gutter /><PName $indent>Density</PName><PVal>None</PVal></PRow>
    </Props>
    <Tabs $h={25} $pad={4}><STab $w={64} $on>Properties</STab><STab $w={73}>Appearance</STab></Tabs>
  </Side>
);

const SKY = "#6fb7f5";
const StatusBar = () => (
  <Status>
    <StatusText $w={1536}>Click an object. Double-click to select an edge loop. Triple-click to select a solid.</StatusText>
    <Sep />
    <Slot $w={203} /><Sep />
    <Slot $w={24} $h={30}><I w={12} h={12}><circle cx="6" cy="6" r="6" fill="#fff" /><path d="M6 5v5M6 2v2" stroke={BLUE} strokeWidth="2" /></I></Slot>
    <Slot $w={8} $h={30}><Up /></Slot><Slot $w={3} /><Sep />
    <Slot $w={203} /><Sep />
    <StatusText $w={305} $center>1 Body</StatusText>
    <Slot $w={17} $h={34}><I w={9} h={17}><path d="M0 5h9L4.500 0z" fill={SKY} /><path d="M0 12h9L4.500 17z" fill="#8b98a5" /></I></Slot>
    <Slot $w={24} $h={34}><Cursor w={9} /><I w={9} h={14}><path d="M1 3h4c4 0 4 6-1 9M4 0L0 3l4 3" stroke={SKY} strokeWidth="2" /></I></Slot>
    <Slot $w={22} $h={34}><Cursor w={10} /></Slot>
    <Slot $w={9} $h={31}><Up /></Slot>
    <Slot $w={29} $h={31}><I w={16} h={12}><path d="M.7 .7h14.600v10.600H.7z" stroke={SKY} strokeWidth="1.700" strokeDasharray="3 1.800" /></I></Slot>
    <Slot $w={3} $h={31}><Up /></Slot>
    <Slot $w={13} /><Sep $pull={7} />
    <Slot $w={25} $h={34}><I w={16} h={16}><path d="M0 8h3c4-3 8-2 11 1M8 1c4 4 3 9 0 14M0 5v6M5 3l3-3 3 3M5 13l3 3 3-3M12 11l4-2-2-4" stroke={SKY} strokeWidth="1.800" /></I></Slot>
    <Slot $w={6} $h={31}><Up /></Slot>
    <Slot $w={32} $h={34}><I w={16} h={16}><path d="M8 1v14M1 8h14M5.500 3.500L8 1l2.500 2.500M5.500 12.500L8 15l2.500-2.500M3.500 5.500L1 8l2.500 2.500M12.500 5.500L15 8l-2.500 2.500" stroke={SKY} strokeWidth="1.800" /></I></Slot>
    <Slot $w={16} $h={34}><I w={16} h={16}><path d="M10 10l5 5" stroke={SKY} strokeWidth="3" /><circle cx="7" cy="7" r="6" fill="#fff" stroke={SKY} strokeWidth="1.500" /></I></Slot>
    <Slot $w={14} $h={31}><Up /></Slot>
    <Slot $w={26} $h={34}><I w={16} h={12}><path d="M0 11l3-8 2 2 9-5 2 3-9 5 1 3z" fill={SKY} /></I></Slot>
    <Slot $w={22} $h={34}><I w={16} h={12}><path d="M16 1l-3 8-2-2-9 5-2-3 9-5-1-3z" fill="#8494a4" /></I></Slot>
  </Status>
);

export default function App() {
  return (
    <Screen>
      <Global />
      <Upper>
        <Behind>
          <BehindBlock $h={260} $bg="#fff" />
          <BehindBlock $h={40} $bg="#e7e7ee" />
          <BehindBlock $h={993} $bg="#efeff5" $line><Thumb /></BehindBlock>
          <BehindBlock $h={48} $bg="#dfebf8" $line />
        </Behind>
        <Window>
          <TopBar />
          <RibbonBar />
          <Work>
            <SidePanels />
            <Main>
              <Frame>
                <Hint>Click an object. Double-click to select an edge loop. Triple-click to select a solid.</Hint>
                <Logo /><Model /><Triad />
              </Frame>
              <DocBar>
                <DocTab>
                  <I w={15} h={15}><rect width="15" height="15" rx="3" fill="#fdc00f" /><path d="M2 14L6 1h3.500L14 14h-4L7.500 6 5.500 14z" fill="#111" /></I>
                  FFF*
                  <I w={8} h={8}><path d="M1 1l6 6M7 1L1 7" stroke="#444" strokeWidth="1.700" /></I>
                </DocTab>
                <DocNav>
                  <Slot $w={14} $h={20}><I w={5} h={9}><path d="M4.500 .5v8L.5 4.500z" stroke="#333" /></I></Slot>
                  <Slot $w={14} $h={20}><I w={5} h={9}><path d="M.5 .5v8l4-4z" stroke="#333" /></I></Slot>
                  <Slot $w={16} $h={20}><I w={9} h={8}><path d="M1 .5l7 7M8 .5l-7 7" stroke="#444" strokeWidth="1.800" /></I></Slot>
                </DocNav>
              </DocBar>
            </Main>
          </Work>
          <StatusBar />
        </Window>
      </Upper>
      <Desktop><RedDot /><TaskChip /></Desktop>
    </Screen>
  );
}
